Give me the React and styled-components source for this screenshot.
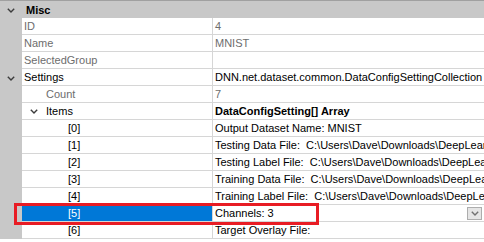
import styled, { createGlobalStyle } from "styled-components";

const GlobalStyle = createGlobalStyle`
    body {
        margin: 0;
        background: #ffffff;
        font-family: "Liberation Sans", Arial, sans-serif;
        font-size: 11px;
    }
`;

const rows = [
    { label: "ID", value: "4", readOnly: true },
    { label: "Name", value: "MNIST", readOnly: true },
    { label: "SelectedGroup", value: "", readOnly: true },
    {
        label: "Settings",
        value: "DNN.net.dataset.common.DataConfigSettingCollection",
        expander: true,
    },
    { label: "Count", value: "7", level: 1, readOnly: true },
    {
        label: "Items",
        value: "DataConfigSetting[] Array",
        level: 1,
        expander: true,
        bold: true,
    },
    { label: "[0]", value: "Output Dataset Name: MNIST", level: 2 },
    {
        label: "[1]",
        value: "Testing Data File:  C:\\Users\\Dave\\Downloads\\DeepLearning\\MNIST\\t10k-images.idx3-ubyte",
        level: 2,
    },
    {
        label: "[2]",
        value: "Testing Label File:  C:\\Users\\Dave\\Downloads\\DeepLearning\\MNIST\\t10k-labels.idx1-ubyte",
        level: 2,
    },
    {
        label: "[3]",
        value: "Training Data File:  C:\\Users\\Dave\\Downloads\\DeepLearning\\MNIST\\train-images.idx3-ubyte",
        level: 2,
    },
    {
        label: "[4]",
        value: "Training Label File:  C:\\Users\\Dave\\Downloads\\DeepLearning\\MNIST\\train-labels.idx1-ubyte",
        level: 2,
    },
    { label: "[5]", value: "Channels: 3", level: 2, selected: true },
    { label: "[6]", value: "Target Overlay File:", level: 2 },
];

const Chevron = ({ color = "#3c3c3c" }) => (
    <svg width="8" height="5" viewBox="0 0 8 5">
        <path d="M0.8 0.8 L4 4 L7.2 0.8" fill="none" stroke={color} strokeWidth="1.4" />
    </svg>
);

const App = () => {
    return (
        <>
            <GlobalStyle />
            <Grid>
                <Category>
                    <Gutter>
                        <Chevron />
                    </Gutter>
                    <CategoryName>Misc</CategoryName>
                </Category>
                {rows.map((row) => {
                    const level = row.level || 0;
                    return (
                        <Row key={row.label}>
                            <Gutter>{row.expander && level === 0 && <Chevron />}</Gutter>
                            <Label
                                $level={level}
                                $readOnly={row.readOnly}
                                $selected={row.selected}
                            >
                                {row.expander && level > 0 && (
                                    <Expander>
                                        <Chevron />
                                    </Expander>
                                )}
                                {row.label}
                            </Label>
                            <Value $readOnly={row.readOnly} $bold={row.bold}>
                                <span>{row.value}</span>
                                {row.selected && (
                                    <DropButton>
                                        <Chevron color="#707070" />
                                    </DropButton>
                                )}
                            </Value>
                        </Row>
                    );
                })}
                <Highlight />
            </Grid>
        </>
    );
};

export default App;

const Grid = styled.div`
    position: relative;
    width: 484px;
    height: 242px;
    overflow: hidden;
    border-top: 1px solid #a0a0a0;
    box-sizing: border-box;
`;

const Category = styled.div`
    display: flex;
    align-items: center;
    height: 17px;
    background: #c8c8c8;
`;

const CategoryName = styled.div`
    padding-left: 4px;
    font-weight: bold;
    color: #000;
`;

const Row = styled.div`
    display: grid;
    grid-template-columns: 22px 191px 1fr;
    height: 17px;
`;

const Gutter = styled.div`
    width: 22px;
    height: 100%;
    background: #c8c8c8;
    display: flex;
    align-items: center;
    justify-content: center;
    padding-top: 1px;
    box-sizing: border-box;
`;

const Label = styled.div`
    position: relative;
    box-sizing: border-box;
    border-bottom: 1px solid #d6d6d6;
    border-right: 1px solid #d6d6d6;
    padding-left: ${(p) => 2 + p.$level * 22}px;
    line-height: 16px;
    white-space: nowrap;
    overflow: hidden;
    color: ${(p) => (p.$selected ? "#ffffff" : p.$readOnly ? "#6d6d6d" : "#000000")};
    background: ${(p) => (p.$selected ? "#0078d7" : "transparent")};
`;

const Expander = styled.span`
    position: absolute;
    left: 8px;
    top: 6px;
    display: flex;
`;

const Value = styled.div`
    display: flex;
    align-items: center;
    box-sizing: border-box;
    border-bottom: 1px solid #d6d6d6;
    padding-left: 2px;
    line-height: 16px;
    white-space: pre;
    overflow: hidden;
    font-weight: ${(p) => (p.$bold ? "bold" : "normal")};
    color: ${(p) => (p.$readOnly ? "#6d6d6d" : "#000000")};
`;

const DropButton = styled.div`
    margin-left: auto;
    margin-right: 2px;
    width: 15px;
    height: 13px;
    flex-shrink: 0;
    box-sizing: border-box;
    border: 1px solid #adadad;
    background: #e5e5e5;
    display: flex;
    align-items: center;
    justify-content: center;
`;

const Highlight = styled.div`
    position: absolute;
    left: 14px;
    top: 202px;
    width: 305px;
    height: 22px;
    box-sizing: border-box;
    border: 3px solid #e81c24;
    pointer-events: none;
`;
